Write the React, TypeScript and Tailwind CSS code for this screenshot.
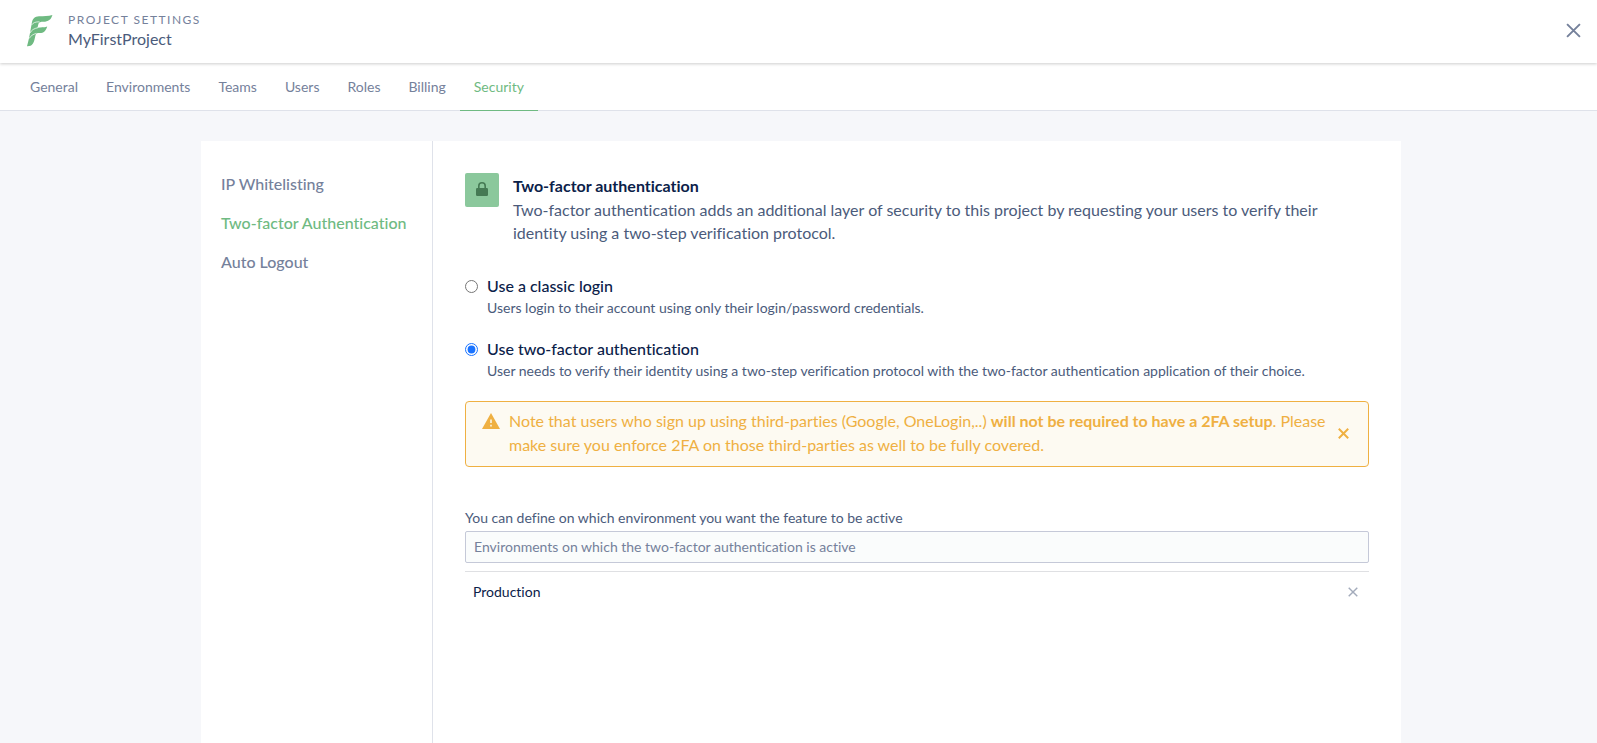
import { useState } from "react";

const tabs = ["General", "Environments", "Teams", "Users", "Roles", "Billing", "Security"];
const sections = ["IP Whitelisting", "Two-factor Authentication", "Auto Logout"];

function Logo() {
  return (
    <svg className="h-8 w-7" viewBox="0 0 28 32" aria-hidden="true">
      <path
        d="M26.4 0C25.2 4.6 22.2 6.7 17.5 6.8C14.6 6.8 12.9 7.2 12.4 9L11.5 12.8C15 11.8 18 12.8 21.2 11.4C20 15.8 17.6 17.9 13.8 18C11.4 18 10 18.2 9.5 20.2C8.6 24 8.4 26.4 6.8 28.8C5.4 30.8 3.6 31.3 1 31.2C2.6 25.6 3.4 21.4 4.2 17L5.8 8C6.6 3.6 8.8 1.5 13 1.3C18 1 22 1.2 26.4 0Z"
        fill="#6fba82"
      />
      <path
        d="M5.4 10.2C7 7.6 9.6 6.8 13.5 6.8M4 18C5.4 15 8.2 13.4 12 12.7M3 23.6C4.8 20.8 7 19.2 10.4 18.4"
        fill="none"
        stroke="#fff"
        strokeWidth="0.7"
      />
    </svg>
  );
}

function Cross({ className }: { className: string }) {
  return (
    <svg className={className} viewBox="0 0 14 14" fill="none" stroke="currentColor" aria-hidden="true">
      <path d="M1 1L13 13M13 1L1 13" />
    </svg>
  );
}

type ChoiceProps = { id: string; title: string; text: string; checked: boolean; onSelect: () => void };

function Choice({ id, title, text, checked, onSelect }: ChoiceProps) {
  return (
    <div className="flex gap-[9px]">
      <input
        id={id}
        type="radio"
        name="login-mode"
        checked={checked}
        onChange={onSelect}
        className="mt-[6px] size-[13px] shrink-0 accent-[#1a73ff]"
      />
      <label htmlFor={id}>
        <span className="block text-base leading-6 font-medium text-[#0b2149]">{title}</span>
        <span className="block text-sm leading-5 text-[#4b5b7b]">{text}</span>
      </label>
    </div>
  );
}

export default function App() {
  const [mode, setMode] = useState("2fa");
  return (
    <div className="flex min-h-screen flex-col bg-[#f6f7fa] font-[Lato,'Liberation_Sans',sans-serif] text-[#4b5b7b] [font-variant-ligatures:none]">
      <header className="relative flex h-[63px] items-center justify-between bg-white pr-4 pb-[2px] pl-[26px] shadow-[0_1px_3px_rgba(0,0,0,0.2)]">
        <div className="flex items-center gap-[14px]">
          <Logo />
          <div>
            <p className="text-xs leading-4 tracking-[1.5px] text-[#75819b]">PROJECT SETTINGS</p>
            <p className="text-base leading-[22px]">MyFirstProject</p>
          </div>
        </div>
        <button type="button" aria-label="Close" className="text-[#75819b]">
          <Cross className="size-[15px] stroke-[1.8]" />
        </button>
      </header>
      <nav className="flex h-12 border-b border-[#dfe2ea] bg-white pl-4 text-sm">
        {tabs.map((tab) => (
          <a
            key={tab}
            href="#"
            className={
              tab === "Security"
                ? "-mb-px flex items-center border-b border-[#6fba82] px-[14px] text-[#6fba82]"
                : "-mb-px flex items-center px-[14px] text-[#75819b]"
            }
          >
            {tab}
          </a>
        ))}
      </nav>
      <div className="flex flex-1 justify-center pt-[30px] pl-[5px]">
        <div className="flex w-full max-w-[1200px] bg-white">
          <aside className="flex w-[232px] shrink-0 flex-col gap-[15px] border-r border-[#dfe2ea] py-[31px] pl-5 text-base leading-6">
            {sections.map((s) => (
              <a
                key={s}
                href="#"
                className={s === "Two-factor Authentication" ? "font-medium text-[#6fba82]" : "font-medium text-[#75819b]"}
              >
                {s}
              </a>
            ))}
          </aside>
          <main className="min-w-0 flex-1 p-8">
            <div className="flex gap-[14px]">
              <div className="flex size-[34px] shrink-0 items-center justify-center rounded-xs bg-[#8bc89c]">
                <svg className="mb-[2px] h-[14px] w-3" viewBox="0 0 12 14" aria-hidden="true">
                  <path d="M2.8 7V4a3.2 3.2 0 0 1 6.4 0v3" fill="none" stroke="#457a54" strokeWidth="1.6" />
                  <rect y="6" width="12" height="8" rx="1.2" fill="#457a54" />
                </svg>
              </div>
              <div>
                <h1 className="text-base leading-[25px] font-bold text-[#0b2149]">Two-factor authentication</h1>
                <p className="text-base leading-[23px]">
                  Two-factor authentication adds an additional layer of security to this project by requesting your users to verify their
                  identity using a two-step verification protocol.
                </p>
              </div>
            </div>
            <div className="mt-[30px] flex flex-col gap-[19px]">
              <Choice
                id="classic"
                title="Use a classic login"
                text="Users login to their account using only their login/password credentials."
                checked={mode === "classic"}
                onSelect={() => setMode("classic")}
              />
              <Choice
                id="two-factor"
                title="Use two-factor authentication"
                text="User needs to verify their identity using a two-step verification protocol with the two-factor authentication application of their choice."
                checked={mode === "2fa"}
                onSelect={() => setMode("2fa")}
              />
            </div>
            <div className="mt-5 flex items-center rounded border border-[#efb042] bg-[#fdfaf2] pt-[7px] pr-[19px] pb-[9px] pl-4 text-[#efb042]">
              <svg className="mt-1 h-4 w-[18px] shrink-0 self-start" viewBox="0 0 18 16" aria-hidden="true">
                <path d="M9 0L18 16H0Z" fill="#efb042" />
                <path d="M9 6.4v3.6M9 11.8v1.8" stroke="#fdfaf2" strokeWidth="1.5" />
              </svg>
              <p className="ml-[9px] flex-1 text-base leading-6">
                Note that users who sign up using third-parties (Google, OneLogin,..){" "}
                <strong className="font-bold">will not be required to have a 2FA setup</strong>. Please make sure you enforce 2FA on those
                third-parties as well to be fully covered.
              </p>
              <button type="button" aria-label="Dismiss" className="shrink-0">
                <Cross className="size-[11px] stroke-[2.5]" />
              </button>
            </div>
            <label htmlFor="environments" className="mt-[39px] block pb-[2px] text-sm leading-[23px]">
              You can define on which environment you want the feature to be active
            </label>
            <input
              id="environments"
              type="text"
              placeholder="Environments on which the two-factor authentication is active"
              className="block h-8 w-full rounded-xs border border-[#c5c9d8] bg-[#fafcfc] px-2 pb-[2px] text-sm placeholder:text-[#75819b]"
            />
            <ul className="mt-2 border-t border-[#dfe0e3]">
              <li className="flex h-10 items-center justify-between pr-[11px] pl-2 text-sm text-[#0b2149]">
                Production
                <button type="button" aria-label="Remove Production" className="text-[#a3abbb]">
                  <Cross className="size-[10px] stroke-2" />
                </button>
              </li>
            </ul>
          </main>
        </div>
      </div>
    </div>
  );
}
